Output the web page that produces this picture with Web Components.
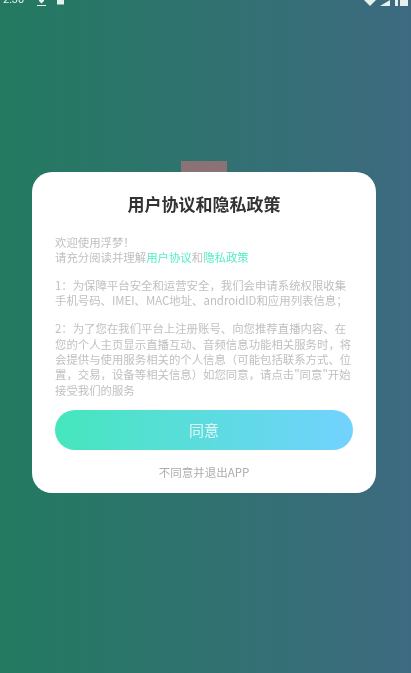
<!DOCTYPE html>
<html lang="zh">
<head>
<meta charset="utf-8">
<title>用户协议和隐私政策</title>
<style>
    html, body { margin: 0; height: 100%; }
    body { font-family: "Noto Sans CJK SC", "Noto Sans", sans-serif; overflow: hidden; }
    privacy-dialog a { color: #55ecc8; }
</style>
</head>
<body>
<privacy-screen>
    <status-bar slot="status"></status-bar>
    <privacy-dialog heading="用户协议和隐私政策">
        <p>欢迎使用浮梦！<br>请充分阅读并理解<a>用户协议</a>和<a>隐私政策</a></p>
        <p>1：为保障平台安全和运营安全，我们会申请系统权限收集<br>手机号码、IMEI、MAC地址、androidID和应用列表信息；</p>
        <p>2：为了您在我们平台上注册账号、向您推荐直播内容、在<br>您的个人主页显示直播互动、音频信息功能相关服务时，将<br>会提供与使用服务相关的个人信息（可能包括联系方式、位<br>置，交易，设备等相关信息）如您同意，请点击"同意"开始<br>接受我们的服务</p>
    </privacy-dialog>
</privacy-screen>

<script>
const screenTemplate = document.createElement('template');
screenTemplate.innerHTML = `
<style>
    :host {
        display: flex;
        flex-direction: column;
        height: 100vh;
        background: linear-gradient(90deg, #237a60 0%, #3d6a80 100%);
    }
    .center {
        flex: 1;
        display: flex;
        padding: 155px 0 0 32px;
    }
</style>
<slot name="status"></slot>
<div class="center"><slot></slot></div>
`;

class PrivacyScreen extends HTMLElement {
    constructor() {
        super();
        this.attachShadow({ mode: 'open' }).appendChild(screenTemplate.content.cloneNode(true));
    }
}

const statusTemplate = document.createElement('template');
statusTemplate.innerHTML = `
<style>
    :host {
        display: flex;
        justify-content: space-between;
        align-items: flex-end;
        height: 6px;
        padding: 0 3px;
        overflow: hidden;
        color: #e8f0ee;
        font-family: "Roboto", sans-serif;
        font-size: 11px;
        filter: blur(.6px);
    }
    .side { display: flex; align-items: flex-end; gap: 9px; }
    .time { line-height: 12px; margin-right: 3px; }
    svg { display: block; fill: currentColor; }
</style>
<div class="side">
    <span class="time">2:30</span>
    <svg width="11" height="6" viewBox="0 0 11 6"><path d="M3 0h5v1L5.5 3.5 3 1zM1 5h9v1H1z"/></svg>
    <svg width="9" height="6" viewBox="0 0 9 6"><path d="M1 0h7v4.5H1z"/></svg>
</div>
<div class="side" style="gap:3px">
    <svg width="12" height="6" viewBox="0 0 12 6"><path d="M0 0h12L6 6z"/></svg>
    <svg width="11" height="6" viewBox="0 0 11 6"><path d="M11 0v6H1z"/></svg>
    <svg width="13" height="6" viewBox="0 0 13 6" style="margin-left:2px"><path d="M0 0h3v6H0zM5 0h8v6H5z"/></svg>
</div>
`;

class StatusBar extends HTMLElement {
    constructor() {
        super();
        this.attachShadow({ mode: 'open' }).appendChild(statusTemplate.content.cloneNode(true));
    }
}

const dialogTemplate = document.createElement('template');
dialogTemplate.innerHTML = `
<style>
    :host { display: block; width: 344px; }
    .tab {
        width: 46px;
        height: 11px;
        margin-left: 149px;
        background: #8a7275;
        filter: blur(.5px);
    }
    .card {
        box-sizing: border-box;
        height: 321px;
        padding: 0 23px;
        background: #fff;
        border-radius: 20px;
        display: flex;
        flex-direction: column;
    }
    h1 {
        margin: 21px 0 0;
        font-size: 17px;
        line-height: 22px;
        font-weight: 700;
        color: #333;
        text-align: center;
        filter: blur(.6px);
    }
    .body {
        margin-top: 19.5px;
        flex: 1;
        min-height: 0;
        font-size: 11.4px;
        line-height: 15.4px;
        color: #c0c0c0;
        white-space: nowrap;
        filter: blur(.6px);
    }
    ::slotted(p) { margin: 0 0 12.5px; }
    button {
        display: block;
        flex: none;
        width: 100%;
        height: 39.5px;
        padding: 0;
        border: 0;
        border-radius: 20px;
        background: linear-gradient(90deg, #45e6bd 0%, #72d2ff 100%);
        color: #e2f8f6;
        font: inherit;
        font-size: 15px;
    }
    button span { filter: blur(.6px); display: block; }
    .quit {
        margin: 15px 0 13.5px;
        text-align: center;
        font-size: 11.5px;
        line-height: 15px;
        color: #adadad;
        filter: blur(.6px);
    }
</style>
<div class="tab"></div>
<div class="card">
    <h1></h1>
    <div class="body"><slot></slot></div>
    <button><span>同意</span></button>
    <div class="quit">不同意并退出APP</div>
</div>
`;

class PrivacyDialog extends HTMLElement {
    constructor() {
        super();
        this.attachShadow({ mode: 'open' }).appendChild(dialogTemplate.content.cloneNode(true));
        this.$heading = this.shadowRoot.querySelector('h1');
    }

    static get observedAttributes() {
        return ['heading'];
    }

    attributeChangedCallback(name, oldValue, newValue) {
        this.$heading.textContent = newValue;
    }
}

customElements.define('privacy-screen', PrivacyScreen);
customElements.define('status-bar', StatusBar);
customElements.define('privacy-dialog', PrivacyDialog);
</script>
</body>
</html>
